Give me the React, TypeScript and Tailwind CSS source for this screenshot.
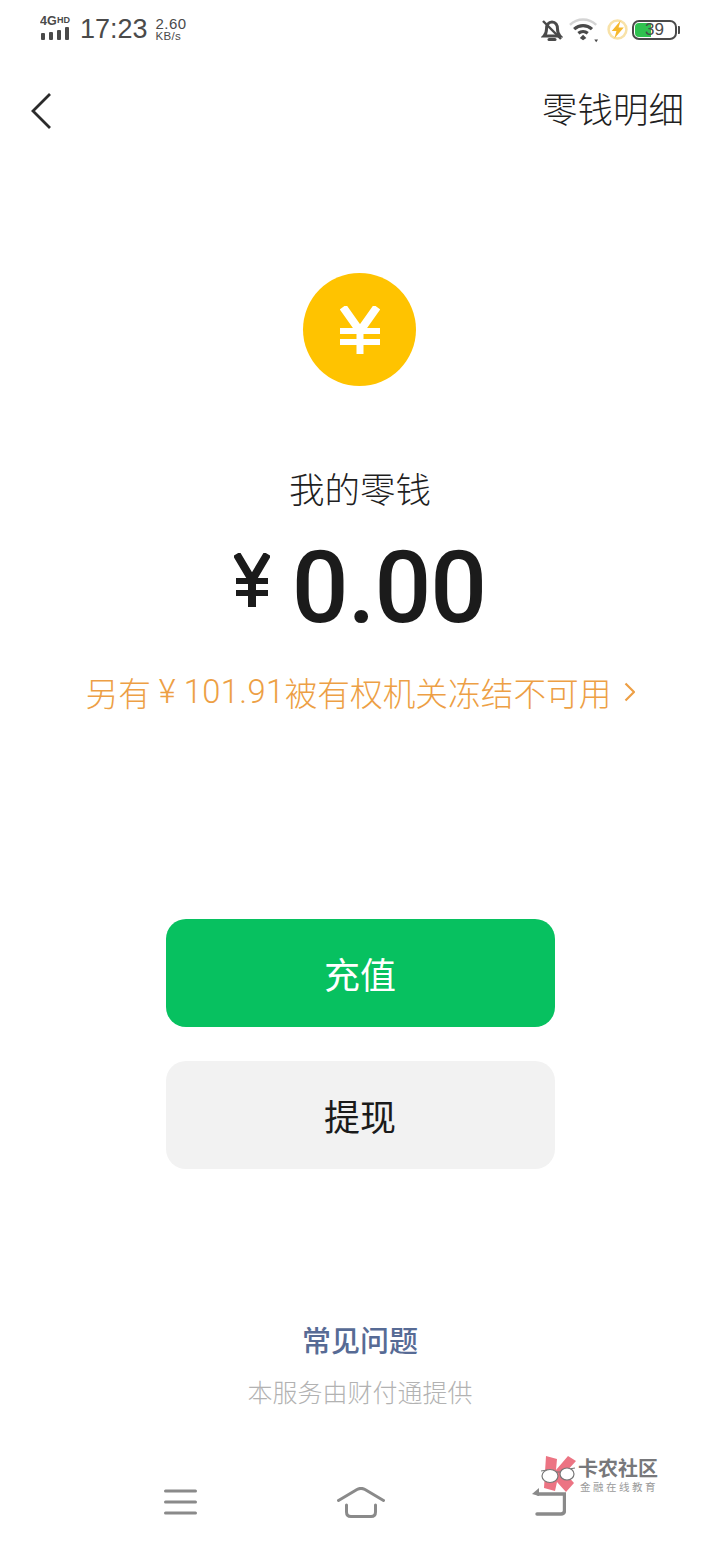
const cjk = "font-['Noto_Sans_CJK_SC','Noto_Sans',sans-serif]";

function StatusBar() {
  return (
    <div className="flex h-[56px] items-center justify-between pl-[40px] pr-[43px] pt-[3px] font-['Liberation_Sans',sans-serif] text-[#4a4a4a]">
      <div className="flex items-center">
        <svg width="31" height="26" viewBox="0 0 31 26" className="mt-[-4px]">
          <text x="0" y="10" fontSize="12.500" fontWeight="700" fill="#4a4a4a" fontFamily="Liberation Sans">4G</text>
          <text x="17" y="8" fontSize="9" fontWeight="700" fill="#4a4a4a" fontFamily="Liberation Sans">HD</text>
          <rect x="1" y="18" width="4" height="7" rx="1" fill="#4a4a4a" />
          <rect x="9" y="17" width="4" height="8" rx="1" fill="#4a4a4a" />
          <rect x="17" y="15" width="4" height="10" rx="1" fill="#4a4a4a" />
          <rect x="25" y="12" width="4" height="13" rx="1" fill="#4a4a4a" />
        </svg>
        <span className="ml-[9px] text-[27px] leading-none">17:23</span>
        <div className="ml-[8px] flex flex-col">
          <span className="text-[15px] leading-[14px] tracking-[0.4px]">2.60</span>
          <span className="text-[11.500px] leading-[11px] tracking-[0.3px]">KB/s</span>
        </div>
      </div>
      <div className="flex items-center">
        <svg width="22" height="24" viewBox="0 0 22 24" fill="none" stroke="#4a4a4a" strokeWidth="3" className="mr-[6px]">
          <path d="M3 18c2-2 2.500-4 2.500-7 0-4 2-7 5.500-7s5.500 3 5.500 7c0 3 .5 5 2.500 7z" />
          <path d="M8 21.500h6" strokeLinecap="round" />
          <path d="M2 3l18 18" strokeWidth="2.400" />
        </svg>
        <svg width="30" height="26" viewBox="0 0 32 26" fill="none" className="mr-[8px]">
          <path d="M1 7.500c8-7.500 20-7.500 28 0" stroke="#d4d4d4" strokeWidth="2.600" />
          <path d="M5.500 12c5.500-5 13.500-5 19 0" stroke="#4a4a4a" strokeWidth="3.400" />
          <path d="M10 16.500c3-2.500 7-2.500 10 0" stroke="#4a4a4a" strokeWidth="3.400" />
          <path d="M15 18l-3.500 3.500 3.500 2.500 3.500-2.500z" fill="#4a4a4a" />
          <path d="M27 23h4l-2 3z" fill="#4a4a4a" />
        </svg>
        <svg width="21" height="21" viewBox="0 0 20 20" fill="none" className="mr-[4px]">
          <circle cx="10" cy="10" r="8.500" stroke="#f8e2a8" strokeWidth="2.400" />
          <path d="M13 1.500L4.500 11.500h4.500L7 18.500l9-10.500h-5z" fill="#f6b92d" />
        </svg>
        <div className="relative h-[20px] w-[45px] rounded-[7px] border-2 border-[#4a4a4a] p-[1px]">
          <div className="h-full w-[16px] rounded-l-[4px] bg-[#2fc14f]" />
          <span className="absolute inset-0 flex items-center justify-center text-[17px] leading-none">39</span>
          <div className="absolute right-[-5px] top-[4px] h-[8px] w-[2px] rounded-r-[1px] bg-[#4a4a4a]" />
        </div>
      </div>
    </div>
  );
}

function Header() {
  return (
    <div className="flex h-[110px] items-center justify-between pl-[31px] pr-[36px]">
      <svg width="20" height="36" viewBox="0 0 20 36" fill="none" stroke="#2b2b2b" strokeWidth="2.800">
        <path d="M19 1L2 18l17 17" />
      </svg>
      <span className={`${cjk} mb-[6px] text-[35.500px] font-light leading-none text-[#1f1f1f]`}>零钱明细</span>
    </div>
  );
}

function Balance() {
  return (
    <div className="flex flex-col items-center">
      <div className="mr-[1px] mt-[107px] flex h-[113px] w-[113px] items-center justify-center rounded-full bg-[#ffc300]">
        <svg width="40" height="48" viewBox="0 0 40 48" fill="none" stroke="#fff">
          <path d="M3 1l17 24L37 1" strokeWidth="8" />
          <path d="M20 22v26" strokeWidth="7" />
          <path d="M0 25h40M0 36h40" strokeWidth="6" />
        </svg>
      </div>
      <div className={`${cjk} mt-[80px] text-[35.500px] font-light leading-[44px] text-[#1f1f1f]`}>我的零钱</div>
      <div className="mt-[30px] flex h-[100px] items-center text-[#1b1b1b]">
        <svg width="36" height="54" viewBox="0 0 36 54" fill="none" stroke="#1b1b1b" className="mt-[-20px]">
          <path d="M2.500 1l15.500 26L33.500 1" strokeWidth="8" />
          <path d="M18 24v30" strokeWidth="8" />
          <path d="M2 28h32M2 40h32" strokeWidth="6" />
        </svg>
        <span className="ml-[22px] mt-[-4px] font-['Roboto',sans-serif] text-[100px] font-medium leading-none tracking-[-1px]">0.00</span>
      </div>
      <div className={`${cjk} mt-[30px] flex h-[44px] items-center text-[32.700px] font-light leading-none text-[#ed9f45]`}>
        <span>另有</span>
        <span className="ml-[8px] font-['Roboto',sans-serif] font-light">¥</span>
        <span className="ml-[8px] font-['Roboto',sans-serif] font-light tracking-[0.4px]">101.91</span>
        <span>被有权机关冻结不可用</span>
        <svg width="11" height="20" viewBox="0 0 11 20" fill="none" stroke="#ed9f45" strokeWidth="2.200" className="ml-[12px]">
          <path d="M1.500 1.500L10 10l-8.500 8.500" />
        </svg>
      </div>
    </div>
  );
}

function Actions() {
  return (
    <div className="mt-[205px] flex flex-col items-center gap-[34px]">
      <button className={`${cjk} h-[108px] w-[389px] rounded-[20px] bg-[#07c160] text-[36px] font-normal text-white`}>充值</button>
      <button className={`${cjk} h-[108px] w-[389px] rounded-[20px] bg-[#f2f2f2] text-[36px] font-normal text-[#1b1b1b]`}>提现</button>
    </div>
  );
}

function Footer() {
  return (
    <div className={`${cjk} mt-[148px] flex flex-col items-center`}>
      <div className="text-[29px] font-medium leading-[44px] text-[#576b95]">常见问题</div>
      <div className="mt-[13px] text-[25px] font-light leading-[34px] text-[#b2b2b2]">本服务由财付通提供</div>
    </div>
  );
}

function NavBar() {
  return (
    <div className="relative mt-[64px] flex h-[60px] items-center pl-[164px]">
      <svg width="33" height="26" viewBox="0 0 33 26" stroke="#8a8a8a" strokeWidth="3" strokeLinecap="round">
        <path d="M1.500 2h30M1.500 13h30M1.500 24h30" />
      </svg>
      <svg width="48" height="31" viewBox="0 0 48 31" fill="none" stroke="#8a8a8a" strokeWidth="3" strokeLinecap="round" strokeLinejoin="round" className="ml-[140px]">
        <path d="M1.500 13.500L20 2.500c2.500-1.400 5.500-1.400 8 0l18.500 11" />
        <path d="M9.500 18v7c0 3 1.500 4.500 4.500 4.500h20c3 0 4.500-1.500 4.500-4.500v-7" />
      </svg>
      <svg width="34" height="28" viewBox="0 0 34 28" fill="none" stroke="#8a8a8a" strokeWidth="3.400" className="ml-[147px]">
        <path d="M5 26h24c2.500 0 3.500-1 3.500-3.500V6H6" strokeLinecap="round" />
        <path d="M7 0L0 6l7 2z" fill="#8a8a8a" stroke="none" />
      </svg>
      {/* watermark over the back button */}
      <div className="absolute left-[541px] top-[-16px] flex items-start">
        <svg width="35" height="36" viewBox="0 0 35 36">
          <path d="M5 0l11 3-1 11L27 0l8 5-11 12 9 10-8 9-9-10-2 9-11-3z" fill="#ec7483" />
          <path d="M0 15l6-1 8 2 6 0 8-3 6-1" fill="none" stroke="#777" strokeWidth="1.200" />
          <ellipse cx="9" cy="20" rx="8" ry="6.500" fill="#fff" stroke="#777" strokeWidth="1.200" />
          <ellipse cx="26" cy="18" rx="7" ry="6" fill="#fff" stroke="#777" strokeWidth="1.200" />
        </svg>
        <div className={`${cjk} ml-[2px] flex flex-col`}>
          <span className="text-[20px] font-bold leading-[24px] text-[#77787b]">卡农社区</span>
          <span className="ml-[2px] text-[10.500px] leading-[13px] tracking-[2.500px] text-[#9a9a9a]">金融在线教育</span>
        </div>
      </div>
    </div>
  );
}

export default function App() {
  return (
    <div className="h-[1544px] w-[720px] overflow-hidden bg-white">
      <StatusBar />
      <Header />
      <Balance />
      <Actions />
      <Footer />
      <NavBar />
    </div>
  );
}
